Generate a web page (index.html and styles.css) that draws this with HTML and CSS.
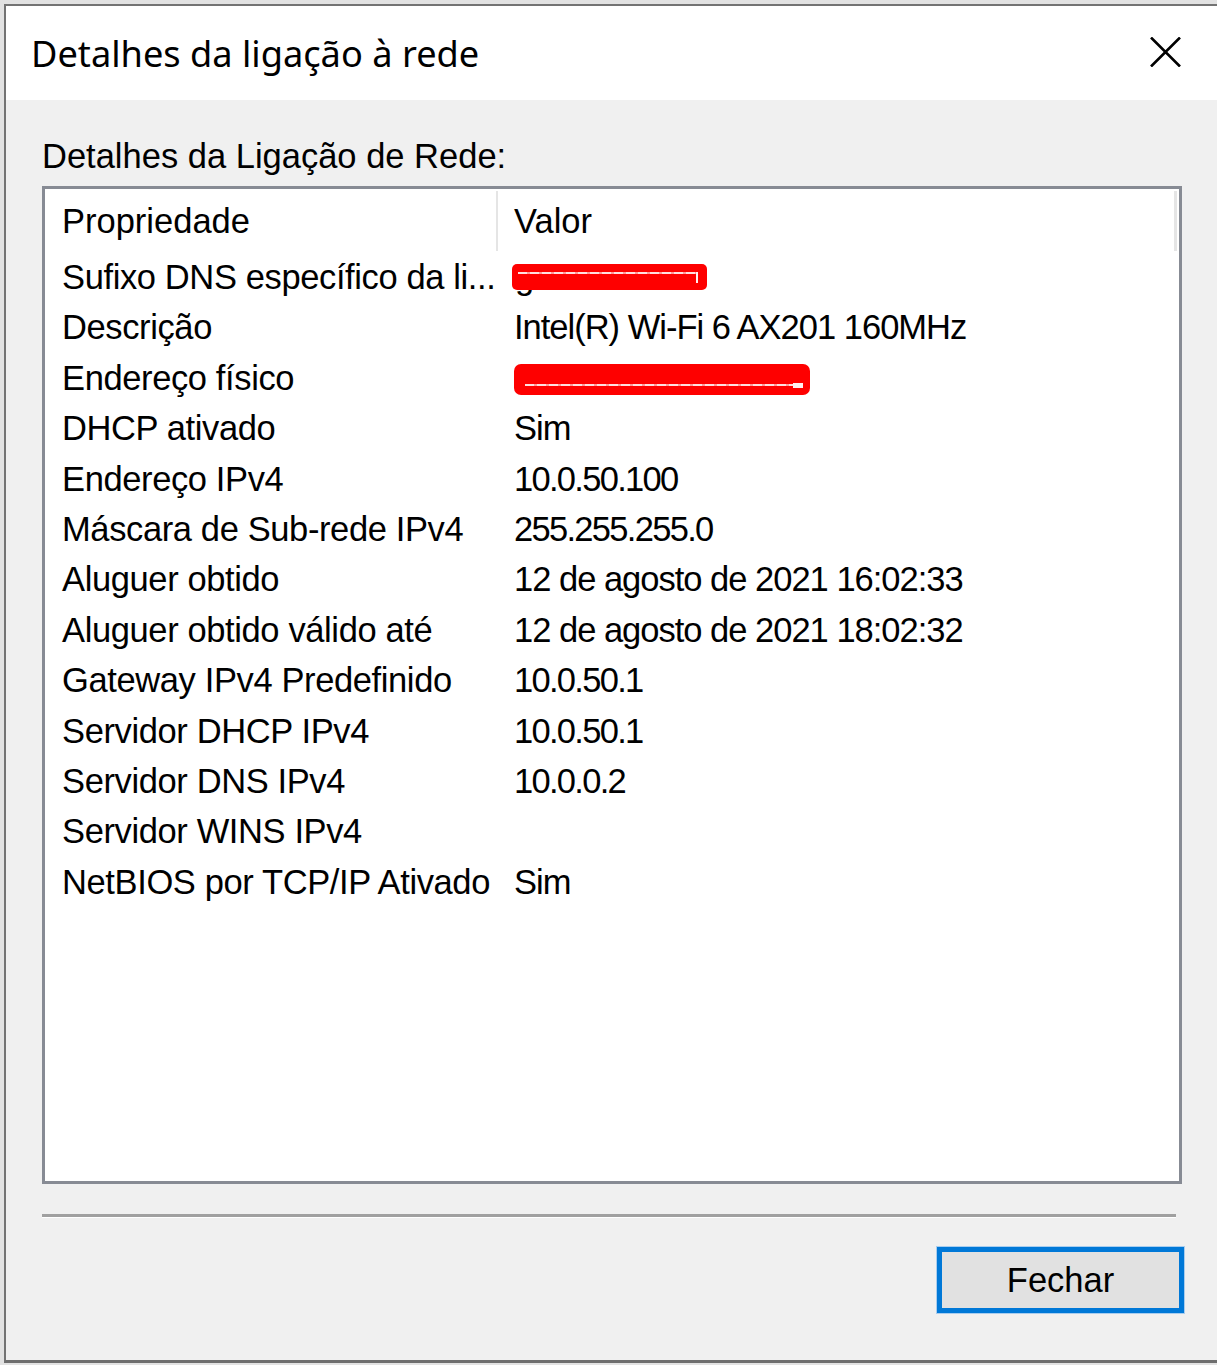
FILE: index.html
```html
<!DOCTYPE html>
<html lang="pt">
<head>
<meta charset="utf-8">
<title>Detalhes da ligação à rede</title>
<link rel="stylesheet" href="styles.css">
</head>
<body>
<div class="window">
  <div class="titlebar">
    <span class="title">Detalhes da ligação à rede</span>
    <svg class="close" width="31" height="30" viewBox="0 0 31 30" aria-label="Fechar">
      <path d="M1 0.5 L30 29.5 M30 0.5 L1 29.5" stroke="#000" stroke-width="2.6" fill="none"/>
    </svg>
  </div>
  <div class="content">
    <div class="label">Detalhes da Ligação de Rede:</div>
    <div class="listbox">
      <div class="header">
        <div class="hcell hc1">Propriedade</div>
        <div class="hcell hc2">Valor</div>
      </div>
      <div class="row"><div class="cell c1">Sufixo DNS específico da li...</div><div class="cell c2"><span class="hid">g</span><span class="redact r1"><span class="wl wl1"></span><span class="tick t1"></span></span></div></div>
      <div class="row"><div class="cell c1">Descrição</div><div class="cell c2">Intel(R) Wi-Fi 6 AX201 160MHz</div></div>
      <div class="row"><div class="cell c1">Endereço físico</div><div class="cell c2"><span class="redact r2"><span class="wl wl2"></span><span class="tick t2"></span></span></div></div>
      <div class="row"><div class="cell c1">DHCP ativado</div><div class="cell c2">Sim</div></div>
      <div class="row"><div class="cell c1">Endereço IPv4</div><div class="cell c2 num">10.0.50.100</div></div>
      <div class="row"><div class="cell c1">Máscara de Sub-rede IPv4</div><div class="cell c2 num">255.255.255.0</div></div>
      <div class="row"><div class="cell c1">Aluguer obtido</div><div class="cell c2">12 de agosto de 2021 16:02:33</div></div>
      <div class="row"><div class="cell c1">Aluguer obtido válido até</div><div class="cell c2">12 de agosto de 2021 18:02:32</div></div>
      <div class="row"><div class="cell c1">Gateway IPv4 Predefinido</div><div class="cell c2 num">10.0.50.1</div></div>
      <div class="row"><div class="cell c1">Servidor DHCP IPv4</div><div class="cell c2 num">10.0.50.1</div></div>
      <div class="row"><div class="cell c1">Servidor DNS IPv4</div><div class="cell c2 num">10.0.0.2</div></div>
      <div class="row"><div class="cell c1">Servidor WINS IPv4</div><div class="cell c2"></div></div>
      <div class="row"><div class="cell c1">NetBIOS por TCP/IP Ativado</div><div class="cell c2">Sim</div></div>
    </div>
    <div class="separator"></div>
    <div class="footer"><button class="btn">Fechar</button></div>
  </div>
</div>
</body>
</html>
```
FILE: styles.css
```css
* { box-sizing: border-box; }
html, body { margin: 0; padding: 0; }
body {
  width: 1217px;
  height: 1365px;
  overflow: hidden;
  background: #e2e2e2;
  font-family: "Liberation Sans", Arial, sans-serif;
  color: #000;
}
.window {
  margin: 4px 0 0 4px;
  width: 1213px;
  border-left: 2px solid #737373;
  border-top: 2px solid #737373;
  border-bottom: 3px solid #6e6e6e;
  background: #f0f0f0;
}
.titlebar {
  height: 94px;
  background: #fff;
  display: flex;
  align-items: center;
  justify-content: space-between;
  padding: 0 36px 0 25px;
}
.title {
  font-family: "Noto Sans", "Open Sans", sans-serif;
  font-size: 36.2px;
  color: #000;
}
.close { display: block; margin-top: -2px; }
.content {
  height: 1260px;
  padding: 36px 0 0 36px;
}
.label {
  font-size: 34.5px;
  line-height: 40px;
  height: 40px;
  white-space: nowrap;
}
.listbox {
  margin-top: 10px;
  width: 1140px;
  height: 998px;
  border: 3px solid #878b94;
  background: #fff;
}
.header {
  display: flex;
  height: 63px;
}
.hcell {
  margin-top: 2px;
  height: 60px;
  display: flex;
  align-items: center;
  font-size: 34.5px;
  line-height: 40px;
  white-space: nowrap;
}
.hc1 { width: 453px; padding-left: 17px; border-right: 2px solid #e5e5e5; }
.hc2 { width: 679px; padding-left: 16px; border-right: 3px solid #e5e5e5; }
.row {
  display: grid;
  grid-template-columns: 453px 1fr;
  height: 50.4px;
  font-size: 34.5px;
  line-height: 50.4px;
  white-space: nowrap;
}
.c1 { padding-left: 17px; letter-spacing: -0.38px; }
.c2 { padding-left: 16px; position: relative; letter-spacing: -1px; }
.c2.num { letter-spacing: -1.7px; }
.hid { display: inline-block; margin-left: 1px; }
.redact {
  position: absolute;
  background: #fe0000;
}
.r1 { left: 14px; top: 12px; width: 195px; height: 26px; border-radius: 5px; }
.r2 { left: 16px; top: 11px; width: 296px; height: 31px; border-radius: 7px; }
.wl {
  position: absolute;
  height: 2px;
  background: repeating-linear-gradient(90deg, rgba(255,235,235,0.95) 0 9px, rgba(255,170,170,0.9) 9px 12px);
}
.wl1 { left: 6px; top: 8px; width: 180px; }
.wl2 { left: 11px; top: 20px; width: 272px; }
.tick { position: absolute; background: #fff0f0; }
.t1 { left: 184px; top: 8px; width: 2px; height: 11px; }
.t2 { left: 279px; top: 19px; width: 10px; height: 5px; }
.separator {
  margin-top: 30px;
  width: 1134px;
  height: 4px;
  background: #a0a0a0;
  border-bottom: 1px solid #fff;
}
.footer {
  margin-top: 29px;
  width: 1142px;
  display: flex;
  justify-content: flex-end;
}
.btn {
  width: 247px;
  height: 66px;
  border: 5px solid #0078d7;
  background: #e1e1e1;
  font-family: "Liberation Sans", Arial, sans-serif;
  font-size: 34.5px;
  color: #000;
  padding: 0;
  margin: 0;
  box-shadow: 0 0 0 1px #a9cdee;
}
```
